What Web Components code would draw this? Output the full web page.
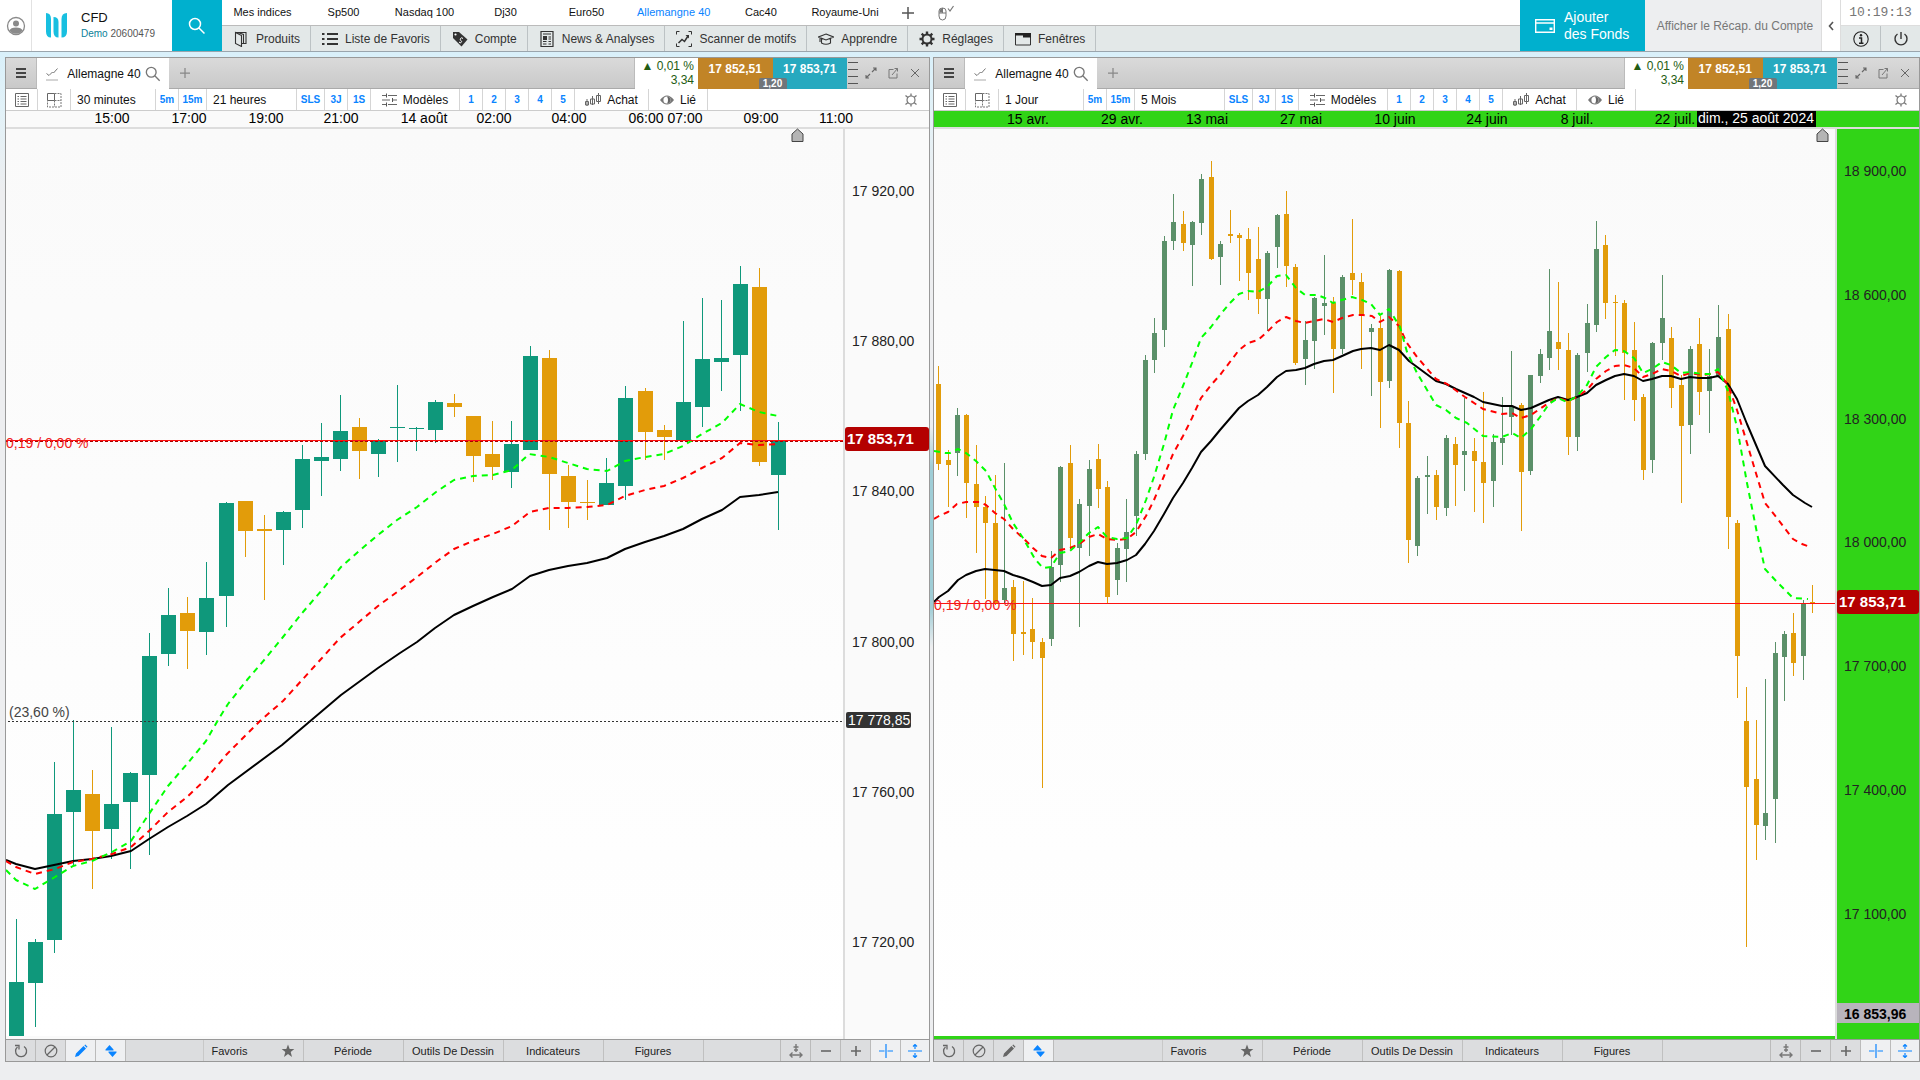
<!DOCTYPE html>
<html lang="fr">
<head>
<meta charset="utf-8">
<title>CFD – Allemagne 40</title>
<style>
html,body{margin:0;height:100%}
body{display:flex;flex-direction:column;font-family:"Liberation Sans",Arial,sans-serif;font-size:12px;color:#111;background:#edeef0;overflow:hidden}
</style>
</head>
<body>
<app-header>
  <index-link>Mes indices</index-link>
  <index-link>Sp500</index-link>
  <index-link>Nasdaq 100</index-link>
  <index-link>Dj30</index-link>
  <index-link>Euro50</index-link>
  <index-link active>Allemangne 40</index-link>
  <index-link>Cac40</index-link>
  <index-link>Royaume-Uni</index-link>
  <menu-item slot="menu" icon="pages">Produits</menu-item>
  <menu-item slot="menu" icon="list">Liste de Favoris</menu-item>
  <menu-item slot="menu" icon="tag">Compte</menu-item>
  <menu-item slot="menu" icon="news">News &amp; Analyses</menu-item>
  <menu-item slot="menu" icon="scan">Scanner de motifs</menu-item>
  <menu-item slot="menu" icon="cap">Apprendre</menu-item>
  <menu-item slot="menu" icon="cog">Réglages</menu-item>
  <menu-item slot="menu" icon="window">Fenêtres</menu-item>
</app-header>
<work-space>
  <chart-panel slot="left" period="30 minutes" range="21 heures" drawing>
    <price-chart data-set="intraday"></price-chart>
  </chart-panel>
  <chart-panel slot="right" period="1 Jour" range="5 Mois">
    <price-chart data-set="daily"></price-chart>
  </chart-panel>
</work-space>

<script>
const ICONS = {
  user:['0 0 20 20','<circle cx="10" cy="10" r="8.5" fill="none" stroke="#8a8a8a" stroke-width="1.3"/><circle cx="10" cy="7.5" r="3" fill="#8a8a8a"/><path d="M3.5 14.5Q4.5 11.5 10 11.5T16.500 14.500Q14 17.700 10 17.700T3.500 14.500Z" fill="#8a8a8a"/>'],
  logo:['0 0 22 25','<path d="M0 0Q5 0 5 6V24.500Q0 24.500 0 18.500ZM7.500 4Q12.500 4 12.500 9V24.500Q7.500 24.500 7.500 18.500ZM21 0Q15.500 0 15.500 6V24.500Q21 24.500 21 18.500Z" fill="#18bfe0"/>'],
  search:['0 0 18 18','<circle cx="7" cy="7" r="5.500" fill="none" stroke="currentColor" stroke-width="1.500"/><path d="M11 11L16.500 16.500" stroke="currentColor" stroke-width="1.500"/>'],
  plus:['0 0 12 12','<path d="M6 0V12M0 6H12" stroke="currentColor" stroke-width="1.500"/>'],
  mouse:['0 0 16 16','<path d="M1 6Q1 3 4.500 3T8 6V11Q8 15 4.500 15T1 11ZM1 8H8M4.500 3V8" fill="none" stroke="#777"/><path d="M1.500 7.500V6Q1.500 3.500 4.500 3.500V7.500Z" fill="#777"/><path d="M10 3.500L12 6L15.500 1" fill="none" stroke="#777" stroke-width="1.200"/>'],
  pages:['0 0 16 16','<path d="M2.500 1.500H13V12.500H9M2.500 1.500L8.500 4.500V15.500L2.500 12.500ZM5 1.500L10.500 3.500V13" fill="none" stroke="#333" stroke-width="1.100"/>'],
  list:['0 0 16 16','<path d="M0 3H2.500M0 8H2.500M0 13H2.500M5 3H16M5 8H16M5 13H16" stroke="#333" stroke-width="1.800"/>'],
  tag:['0 0 16 16','<path d="M1 1H7L15.500 8.500L9.500 15.500L1 7Z" fill="#333"/><circle cx="3.500" cy="3.500" r="1.100" fill="#fff"/><path d="M11 7.500Q9.500 6 8.500 7.500T9 9.500T8.500 12L7 11" fill="none" stroke="#fff"/>'],
  news:['0 0 16 16','<path d="M2 .500H14V15.500H2Z" fill="none" stroke="#333" stroke-width="1.200"/><path d="M4 3H12M9.500 6H12M9.500 8H12M4 10.500H7.500M9.500 10.500H12M4 13H7.500M9.500 13H12" stroke="#333" stroke-width="1.100"/><path d="M4 5H8V9H4Z" fill="#333"/>'],
  scan:['0 0 16 16','<path d="M.5 3.500V.5H3.500M12.500 .5H15.500V3.500M15.500 12.500V15.500H12.500M3.500 15.500H.5V12.500" fill="none" stroke="#333"/><path d="M2.500 12L6 8.500L8.500 10.500L12 5" fill="none" stroke="#333" stroke-width="1.500"/><path d="M9.500 4H13V7.500Z" fill="#333"/>'],
  cap:['0 0 16 16','<path d="M8 3L15.500 6L8 9L.5 6ZM3.500 7.500V12Q8 14.500 12.500 12V7.500M2 7V11" fill="none" stroke="#333" stroke-width="1.100"/>'],
  cog:['0 0 16 16','<circle cx="8" cy="8" r="4.500" fill="none" stroke="#333" stroke-width="2"/><path d="M8 .5V3M8 13V15.500M.5 8H3M13 8H15.500M2.700 2.700L4.500 4.500M11.500 11.500L13.300 13.300M2.700 13.300L4.500 11.500M11.500 4.500L13.300 2.700" stroke="#333" stroke-width="2.400"/>'],
  window:['0 0 16 16','<path d="M.5 2.500H15.500V14H.5Z" fill="none" stroke="#333"/><path d="M0 2H16V6.500H8V4.500H0Z" fill="#222"/>'],
  wallet:['0 0 20 16','<path d="M.7 1.700H19.300V14.300H.7ZM.7 5H19.300" fill="none" stroke="#fff" stroke-width="1.400"/><path d="M14.500 9.500H17.500V12H14.500Z" fill="#fff"/>'],
  chevron:['0 0 6 10','<path d="M5 1L1.500 5L5 9" fill="none" stroke="#555" stroke-width="1.600"/>'],
  info:['0 0 16 16','<circle cx="8" cy="8" r="7.200" fill="none" stroke="#222" stroke-width="1.100"/><circle cx="8" cy="4.300" r="1.200" fill="#222"/><path d="M6 7H8.500V12M6 12.200H10.500" fill="none" stroke="#222" stroke-width="1.500"/>'],
  power:['0 0 16 16','<path d="M8 1V8M4.500 3A6 6 0 1 0 11.500 3" fill="none" stroke="#333" stroke-width="1.400"/>'],
  burger:['0 0 12 12','<path d="M1 2H11M1 6H11M1 10H11" stroke="#444" stroke-width="1.800"/>'],
  trend:['0 0 14 14','<path d="M1.500 6.500L4 8.500L7.500 5L8.500 6L12.500 1.500" fill="none" stroke="#777"/><path d="M1 13H13" stroke="#aaa"/>'],
  ruler:['0 0 10 24','<path d="M0 1.500H10M0 8.500H10M0 15.500H10M0 22.500H10" stroke="#555"/>'],
  expand:['0 0 12 12','<path d="M7 5L11 1M8 1H11V4M5 7L1 11M1 8V11H4" fill="none" stroke="#666" stroke-width="1.100"/>'],
  popout:['0 0 12 12','<path d="M6.500 2.500H2V11H10V6.500M5 8L10.500 1.500M7.500 1.500H10.500V4.500" fill="none" stroke="#777"/>'],
  close:['0 0 12 12','<path d="M2 2L10 10M10 2L2 10" stroke="#666"/>'],
  sheet:['0 0 14 14','<path d="M.5 .5H13.500V13.500H.5Z" fill="none" stroke="#666"/><path d="M2.500 3.500H4M5.500 3.500H11.500M2.500 6H4M5.500 6H11.500M2.500 8.500H4M5.500 8.500H11.500M2.500 11H4M5.500 11H11.500" stroke="#666"/>'],
  grid:['0 0 16 16','<path d="M1.500 1.500H8.500V8.500H1.500Z" fill="none" stroke="#666"/><path d="M8.500 1.500H15V15H1.500V8.500M8.500 8.500V15M8.500 8.500H15" fill="none" stroke="#777" stroke-dasharray="2 1"/>'],
  sliders:['0 0 15 14','<path d="M0 2.500H4M6 2.500H15M0 7H8M11 7H15M0 11.500H4M6 11.500H15" stroke="#666" stroke-width="1.200"/><path d="M4.500 .5V4.500M10.500 5V9M4.500 9.500V13.500" stroke="#555"/>'],
  candles:['0 0 16 14','<path d="M2 6V13M.5 8.500H3.500V12H.5ZM7.500 3V12M5.500 6H9.500V11H5.500ZM13.500 0V11M11.500 2.500H15.500V8.500H11.500Z" fill="none" stroke="#666"/>'],
  eye:['0 0 14 12','<path d="M0 6Q7 -3 14 6Q7 15 0 6Z" fill="#777"/><circle cx="7" cy="6" r="3.600" fill="#fff"/><path d="M7 2.400A3.600 3.600 0 0 1 7 9.600Q9 6 7 2.400Z" fill="#666"/>'],
  gear:['0 0 14 14','<circle cx="7" cy="7" r="4" fill="none" stroke="#777" stroke-width="1.200"/><path d="M7 .5V3M7 11V13.500M1.500 2.500L4 4.500M10 9.500L12.500 11.500M1.500 11.500L4 9.500M10 4.500L12.500 2.500" stroke="#777" stroke-width="1.300"/>'],
  reload:['0 0 14 14','<path d="M3.500 3A5.500 5.500 0 1 0 10 2.500" fill="none" stroke="#666" stroke-width="1.300"/><path d="M1 1.500H5V5.500" fill="none" stroke="#666" stroke-width="1.300"/>'],
  ban:['0 0 14 14','<circle cx="7" cy="7" r="5.800" fill="none" stroke="#666" stroke-width="1.200"/><path d="M3 11L11 3" stroke="#666" stroke-width="1.200"/>'],
  pencil:['0 0 14 14','<path d="M1 13L2 9.500L9.500 2L12 4.500L4.500 12ZM10.300 1.300L11.300 .5L13.500 2.700L12.700 3.700Z" fill="currentColor"/>'],
  updown:['0 0 12 14','<path d="M4.500 1L8.500 5.500V6.500H.5V5.500ZM7.500 13L3.500 8.500V7.500H11.500V8.500Z" fill="#0a84ff"/>'],
  star:['0 0 14 14','<path d="M7 .5L8.700 5H13.300L9.700 8L11 13L7 10L3 13L4.300 8L.7 5H5.300Z" fill="#666"/>'],
  fit:['0 0 14 14','<path d="M7 0V8M4.500 3H9.500M1 11H13M3.500 8.500L1 11L3.500 13.500M10.500 8.500L13 11L10.500 13.500M5 6H9" fill="none" stroke="#777" stroke-width="1.400"/>'],
  minus:['0 0 12 12','<path d="M1 6H11" stroke="#666" stroke-width="1.600"/>'],
  add:['0 0 12 12','<path d="M1 6H11M6 1V11" stroke="#666" stroke-width="1.600"/>'],
  cross:['0 0 14 14','<path d="M7 0V14M0 7H5.500M8.500 7H14" stroke="#0a84ff" stroke-width="1.200"/>'],
  vfit:['0 0 14 14','<path d="M0 7H14M7 0V5M7 9V14M5 2.500L7 .5L9 2.500M5 11.500L7 13.500L9 11.500" fill="none" stroke="#0a84ff" stroke-width="1.200"/>']
};
const icon = (name, w, h = w) => `<svg viewBox="${ICONS[name][0]}" width="${w}" height="${h}" aria-hidden="true">${ICONS[name][1]}</svg>`;
const BASE = ':host,*{box-sizing:border-box}button{font:inherit;color:inherit;background:none;border:0;margin:0;padding:0;display:flex;align-items:center;justify-content:center;white-space:nowrap}svg{display:block;flex:none}';

class Base extends HTMLElement {
  connectedCallback() {
    if (this.shadowRoot) return;
    this.attachShadow({mode: 'open'}).innerHTML = `<style>${BASE}${this.css()}</style>${this.html()}`;
  }
}

customElements.define('index-link', class extends Base {
  css() { return ':host{display:block;min-width:81px}:host([active]){--c:#0a84ff}a{display:flex;justify-content:center;padding:0 10px;font-size:11px;line-height:25px;color:var(--c,#111);text-decoration:none;white-space:nowrap}'; }
  html() { return '<a href="#"><slot></slot></a>'; }
});

customElements.define('menu-item', class extends Base {
  css() { return ':host{display:flex;border-right:1px solid #bcc2c4}button{gap:7px;padding:0 10px 0 11px;color:#333}'; }
  html() { return `<button>${icon(this.getAttribute('icon'), 16)}<slot></slot></button>`; }
});

customElements.define('app-header', class extends Base {
  css() { return `:host{display:flex;height:52px;background:#fff;border-bottom:1px solid #9aa5ad;flex:none}
  .user{width:32px;border-right:1px solid #e2e2e2;align-self:stretch}
  .brand{display:flex;align-items:center;gap:13px;width:140px;padding-left:14px}
  .brand p{margin:0;font-size:13px;line-height:16px}.brand small{display:block;font-size:10px;line-height:15px;color:#555}.brand b{font-weight:400;color:#0b7f99}
  .search{width:50px;background:#00b0ce;color:#fff}
  .main{flex:1;min-width:0;display:flex;flex-direction:column}
  nav{display:flex;align-items:center;height:26px;border-bottom:1px solid #bbb}
  .menu{display:flex;flex:1;background:#e3e8e8}
  .tool{width:38px;color:#555}
  .fund{background:#00b0ce;color:#fff;width:125px;gap:9px;font-size:14px;line-height:17px;text-align:left;justify-content:flex-start;padding-left:15px}
  .recap{background:#edeef0;color:#777;width:177px;padding-left:4px;border-right:1px solid #ddd}
  .chev{width:18px}
  .side{width:80px;display:flex;flex-direction:column;border-left:1px solid #ddd}
  time{height:26px;font:13px/25px "Liberation Mono",monospace;color:#777;text-align:center;border-bottom:1px solid #ddd}
  .side div{flex:1;display:flex;background:#e3e8e8}.side button{flex:1}.side button+button{border-left:1px solid #bcc2c4}`; }
  html() { return `<button class="user" aria-label="Profil">${icon('user', 20)}</button>
  <div class="brand">${icon('logo', 22, 25)}<p>CFD<small><b>Demo</b> 20600479</small></p></div>
  <button class="search" aria-label="Rechercher">${icon('search', 18)}</button>
  <div class="main"><nav><slot></slot><button class="tool" aria-label="Ajouter une liste">${icon('plus', 12)}</button><button class="tool" aria-label="Souris">${icon('mouse', 16)}</button></nav>
  <div class="menu"><slot name="menu"></slot></div></div>
  <button class="fund">${icon('wallet', 20, 16)}<span>Ajouter<br>des Fonds</span></button>
  <button class="recap">Afficher le Récap. du Compte</button>
  <button class="chev" aria-label="Replier">${icon('chevron', 6, 10)}</button>
  <div class="side"><time>10:19:13</time><div><button aria-label="Informations">${icon('info', 16)}</button><button aria-label="Quitter">${icon('power', 16)}</button></div></div>`; }
});

customElements.define('work-space', class extends Base {
  css() { return `:host{flex:1;min-height:0;display:grid;grid-template-columns:925fr 3px 987fr;padding:5px 0 18px 5px;
  background:linear-gradient(#d9f0fa 0,#e3f2f8 60px,#edeef0 140px)}
  .gap{background:linear-gradient(transparent 370px,#9fcdd6 410px,#9fcdd6 550px,transparent 590px)}`; }
  html() { return '<slot name="left"></slot><div class="gap"></div><slot name="right"></slot>'; }
});

customElements.define('chart-panel', class extends Base {
  css() { return `:host{display:flex;flex-direction:column;min-width:0;border:1px solid #999;background:#fff}
  .tabs{display:flex;height:31px;background:linear-gradient(#dadada,#c9c9c9);border-bottom:1px solid #aaa}
  .burger{width:31px;border-right:1px solid #bbb}
  .tab{width:132px;background:#fff;gap:8px;height:31px}.tab svg:last-child{margin-left:-4px;color:#777}
  .new{width:32px;color:#888}.fill{flex:1;border-right:1px solid #bbb}
  .chg{width:63px;background:#fff;height:31px;color:#235c12;text-align:right;padding:1px 4px 0 0;line-height:14px}
  .quotes{position:relative;display:flex;width:149px;font-weight:700;color:#fff}
  .quotes button{flex:1;height:31px;align-items:flex-start;padding-top:4px;background:#c18427}.quotes button+button{background:#27a9bf}
  .spread{position:absolute;left:50%;bottom:-1px;transform:translateX(-50%);width:28px;height:11px;line-height:11px;font-size:10px;text-align:center;background:#70757a;border-radius:2px 2px 0 0}
  .win{display:flex;align-items:center;width:82px}.win svg:first-child{margin:0 2px 0 1px}.win button{width:22px}
  .bar{display:flex;height:22px;border-bottom:1px solid #ccc;background:#fff}
  .bar button{border-right:1px solid #d5d5d5;width:23px}
  .bar .s{font-size:10px;font-weight:700;color:#0a84ff}
  .bar .w28{width:28px}.bar .ic{width:32px}.bar .ic+.ic{width:33px}
  .bar .per{width:85px;justify-content:flex-start;padding-left:6px}.bar .rng{width:90px;justify-content:flex-start;padding-left:6px}
  .bar .mod{width:89px;gap:6px}.bar .buy{width:74px;gap:6px}.bar .lnk{width:59px;gap:6px}
  .bar .set{width:36px;margin-left:auto;border:0}
  ::slotted(*){flex:1;min-height:0}
  footer{display:flex;height:22px;border-top:1px solid #999;background:#dcdddf;font-size:11px;color:#222;justify-content:space-between}
  footer div{display:flex}footer button{width:30px;border-right:1px solid #bbb;color:#666}footer .on{background:#eff0f2;color:#0a84ff}
  footer .mid{border-left:1px solid #c8c8c8}.mid button{width:100px;color:#222;border-color:#c0c0c0}.mid .fav{justify-content:space-between;padding:0 8px}.mid .fav span{flex:1;text-align:left}
  footer .end{border-left:1px solid #bbb}footer .end button:last-child{border:0;width:28px}`; }
  html() {
    const s = (t, c = '') => `<button class="s ${c}">${t}</button>`;
    return `<div class="tabs"><button class="burger" aria-label="Menu">${icon('burger', 12)}</button>
    <button class="tab">${icon('trend', 14)}<span>Allemagne 40</span>${icon('search', 16)}</button>
    <button class="new" aria-label="Nouvel onglet">${icon('plus', 10)}</button><div class="fill"></div>
    <div class="chg">▲ 0,01 %<br>3,34</div>
    <div class="quotes"><button>17 852,51</button><button>17 853,71</button><span class="spread">1,20</span></div>
    <div class="win">${icon('ruler', 10, 24)}<button aria-label="Agrandir">${icon('expand', 12)}</button><button aria-label="Détacher">${icon('popout', 12)}</button><button aria-label="Fermer">${icon('close', 12)}</button></div></div>
    <div class="bar"><button class="ic" aria-label="Ordres">${icon('sheet', 14)}</button><button class="ic" aria-label="Grille">${icon('grid', 16)}</button>
    <button class="per">${this.getAttribute('period')}</button>${s('5m')}${s('15m', 'w28')}<button class="rng">${this.getAttribute('range')}</button>
    ${s('SLS', 'w28')}${s('3J')}${s('1S')}<button class="mod">${icon('sliders', 15, 14)}Modèles</button>${s(1)}${s(2)}${s(3)}${s(4)}${s(5)}
    <button class="buy">${icon('candles', 16, 14)}Achat</button><button class="lnk">${icon('eye', 14, 12)}Lié</button><button class="set" aria-label="Options">${icon('gear', 14)}</button></div>
    <slot></slot>
    <footer><div><button aria-label="Recharger">${icon('reload', 14)}</button><button aria-label="Aucun">${icon('ban', 14)}</button><button class="${this.hasAttribute('drawing') ? 'on' : ''}" aria-label="Dessiner">${icon('pencil', 14)}</button><button class="on" aria-label="Échelle">${icon('updown', 12, 14)}</button></div>
    <div class="mid"><button class="fav"><span>Favoris</span>${icon('star', 14)}</button><button>Période</button><button>Outils De Dessin</button><button>Indicateurs</button><button>Figures</button></div>
    <div class="end"><button aria-label="Ajuster">${icon('fit', 14)}</button><button aria-label="Réduire">${icon('minus', 12)}</button><button aria-label="Augmenter">${icon('add', 12)}</button><button class="on" aria-label="Curseur">${icon('cross', 14)}</button><button class="on" aria-label="Ajustement vertical">${icon('vfit', 14)}</button></div></footer>`;
  }
});

/* Candles: left edge, body top, body bottom, high, low; a leading "-" marks a falling candle. */
const DATA = {
  intraday: {
    left: 6, axis: 84, width: 15, up: '#0f987b', axisBg: '#fafafa', timeY: 12,
    times: [[112,'15:00'],[189,'17:00'],[266,'19:00'],[341,'21:00'],[424,'14 août'],[494,'02:00'],[569,'04:00'],[646,'06:00'],[685,'07:00'],[761,'09:00'],[836,'11:00']],
    marker: 797, last: 440, note: 443, fib: 721,
    prices: [[191,'17 920,00'],[341,'17 880,00'],[491,'17 840,00'],[642,'17 800,00'],[792,'17 760,00'],[942,'17 720,00']],
    candles: `9 982 1036 919 1036|28 942 983 939 1027|47 814 940 762 953|66 790 812 720 865|-85 794 831 770 889|104 804 829 727 859|123 773 802 772 869|142 656 775 633 855|161 615 654 588 666|-180 613 631 597 669|199 598 632 562 655|219 503 596 502 627|-238 501 531 501 557|-257 529 531 515 600|276 512 530 511 565|295 459 510 445 528|314 457 461 423 496|333 431 459 395 471|-352 427 451 418 479|371 440 454 439 477|390 427 428 385 462|409 428 429 427 451|428 402 430 400 443|-447 403 407 394 417|-466 416 456 416 482|-485 454 467 421 480|504 444 472 421 488|523 356 450 346 450|-542 358 474 350 530|-561 476 502 465 528|-580 502 503 480 520|599 483 505 458 505|618 398 486 386 500|-638 391 432 388 460|-657 430 437 425 460|676 402 440 321 440|695 359 407 298 427|714 358 362 300 391|733 284 355 266 411|-752 287 462 268 466|771 441 475 422 530`,
    slow: '6,860 16,864 35,869 54,865 73,861 92,859 111,856 131,851 149,839 168,827 187,816 206,804 228,785 282,745 341,695 378,668 400,653 417,642 435,628 454,615 473,606 493,597 512,589 530,576 549,570 568,566 587,563 607,558 625,549 645,542 664,536 683,529 702,519 722,510 740,497 759,495 778,492',
    mid: '6,861 16,867 35,874 55,869 73,862 92,859 112,854 131,847 149,831 168,812 187,797 206,779 227,754 260,721 283,701 322,658 340,638 359,622 378,606 397,592 417,577 436,562 454,549 473,541 493,534 512,526 530,512 549,508 568,508 587,507 607,505 625,496 645,490 664,486 683,478 702,468 722,458 740,443 759,445 778,444',
    fast: '6,870 16,880 35,889 55,877 73,866 92,861 112,852 131,841 149,814 168,786 187,764 206,741 218,720 228,704 247,680 265,659 283,637 303,612 322,590 341,567 359,551 378,535 397,520 417,507 436,492 454,480 473,476 493,475 512,470 529,454 549,457 568,463 587,469 607,471 625,461 645,457 664,454 683,446 702,434 722,423 740,404 759,412 778,416'
  },
  daily: {
    left: 934, axis: 82, width: 5, up: '#5b9069', axisBg: '#31d417', timeY: 13,
    times: [[1028,'15 avr.'],[1122,'29 avr.'],[1207,'13 mai'],[1301,'27 mai'],[1395,'10 juin'],[1487,'24 juin'],[1577,'8 juil.'],[1675,'22 juil.']],
    cursor: 'dim., 25 août 2024', marker: 1822, last: 603, note: 605,
    prices: [[171,'18 900,00'],[295,'18 600,00'],[419,'18 300,00'],[542,'18 000,00'],[666,'17 700,00'],[790,'17 400,00'],[914,'17 100,00']],
    low: [1013,'16 853,96'],
    candles: `-936 384 464 366 470|-946 460 465 450 507|955 415 453 408 476|-964 415 483 414 518|-974 484 507 445 553|-983 507 523 496 599|-993 523 603 475 605|1002 588 600 463 603|-1011 587 634 580 661|-1021 632 634 581 655|-1030 629 642 598 659|-1040 642 658 638 788|1049 567 639 551 646|1058 467 565 466 582|-1068 463 538 445 549|1077 504 548 499 627|1087 469 506 460 556|-1096 459 489 444 508|-1105 487 597 481 603|1115 548 580 543 595|1124 532 549 499 582|1134 454 516 451 536|1143 360 454 355 460|1152 333 360 318 373|1162 241 330 236 347|1171 222 241 194 250|-1181 224 243 211 251|1190 222 245 221 286|1199 179 223 174 235|-1209 177 259 161 260|1218 244 257 241 285|-1228 234 236 210 243|-1237 235 238 233 281|-1246 239 273 228 300|-1256 259 299 227 314|1265 253 299 251 331|1275 215 247 214 268|-1284 214 266 191 287|-1293 267 363 264 365|1303 340 359 321 385|1312 298 341 297 369|1322 303 306 255 335|-1331 303 349 297 393|1340 277 349 275 354|-1350 273 280 219 295|-1359 282 316 273 369|1369 328 332 324 396|-1378 328 382 316 428|1387 270 381 269 388|-1397 271 423 270 448|-1406 423 540 401 563|1415 478 546 476 556|1425 475 477 456 514|-1434 475 507 470 520|1444 438 508 435 516|-1453 444 465 437 506|1462 451 455 398 491|-1472 451 461 438 512|-1481 462 483 392 523|1491 442 481 434 507|1500 438 443 397 465|1509 406 417 351 435|-1519 405 472 403 531|1528 375 471 375 475|1538 354 376 349 383|1547 331 358 269 370|-1556 342 349 282 370|-1566 350 437 333 455|1575 355 437 353 451|1585 323 353 304 372|1594 249 325 221 332|-1603 245 303 235 319|-1613 302 303 295 356|-1622 303 353 300 400|-1632 350 400 322 421|-1641 397 470 394 480|1650 343 460 342 473|1660 318 343 275 360|-1669 338 388 327 408|-1679 385 426 375 503|1688 349 425 346 454|-1697 344 392 318 415|1707 376 391 349 433|1716 337 376 305 376|-1726 329 517 314 549|-1735 523 656 520 698|-1744 721 787 687 947|-1754 779 825 720 860|1763 813 826 679 840|1773 653 799 642 843|1782 634 657 631 701|-1791 633 663 613 676|1801 603 656 600 680|-1810 602 603 585 613`,
    slow: '934,602 939,597 948,591 958,580 966,575 976,571 985,569 1004,571 1013,575 1023,578 1033,582 1042,586 1051,585 1060,578 1070,576 1079,572 1089,566 1098,562 1107,564 1117,563 1127,560 1136,555 1145,544 1154,531 1164,514 1173,498 1183,483 1192,468 1201,452 1211,441 1220,430 1239,408 1248,401 1258,395 1267,387 1277,377 1286,371 1296,370 1305,368 1314,364 1324,361 1333,360 1342,356 1353,351 1361,349 1371,348 1380,350 1389,345 1399,350 1409,361 1436,381 1446,384 1456,389 1474,397 1483,402 1502,406 1512,406 1521,410 1531,408 1540,404 1549,400 1558,397 1568,400 1577,397 1587,393 1596,385 1606,380 1615,376 1624,374 1634,376 1643,381 1652,379 1662,376 1671,376 1681,379 1690,377 1699,378 1709,378 1718,376 1728,384 1737,399 1747,424 1765,466 1783,485 1793,495 1805,503 1812,507',
    mid: '934,519 939,516 948,512 957,504 966,502 980,502 986,505 995,513 1004,519 1013,529 1023,538 1033,548 1042,556 1051,558 1060,550 1070,548 1079,544 1089,537 1098,534 1107,539 1117,540 1127,539 1136,532 1146,516 1154,500 1164,476 1173,454 1183,436 1192,418 1201,398 1211,385 1220,375 1239,350 1248,343 1258,340 1267,332 1277,322 1286,317 1296,321 1305,323 1324,319 1333,322 1342,318 1353,315 1363,315 1372,316 1380,322 1389,317 1399,326 1407,343 1417,357 1436,379 1447,384 1465,397 1483,409 1502,414 1512,413 1521,418 1531,415 1550,402 1558,398 1568,401 1577,397 1588,389 1596,379 1606,371 1615,366 1624,365 1634,368 1643,377 1652,374 1662,369 1671,371 1681,376 1690,373 1702,375 1710,374 1718,372 1728,385 1737,410 1747,443 1755,470 1765,503 1777,518 1793,539 1802,544 1810,547',
    fast: '934,451 945,453 950,453 958,449 966,453 976,461 986,471 995,488 1004,504 1013,523 1023,538 1035,559 1043,568 1051,567 1060,553 1070,551 1079,543 1089,533 1098,527 1107,537 1117,539 1127,538 1136,525 1146,500 1154,477 1164,444 1173,410 1183,386 1192,363 1201,338 1211,327 1220,315 1229,304 1239,294 1248,291 1258,292 1267,287 1277,276 1286,275 1296,288 1305,295 1317,295 1325,298 1333,303 1342,300 1352,297 1362,300 1371,304 1380,315 1389,309 1400,327 1407,352 1417,373 1436,405 1446,410 1456,418 1467,423 1483,436 1502,437 1512,433 1521,438 1531,429 1540,417 1549,404 1558,398 1567,402 1577,396 1587,385 1596,367 1606,357 1615,350 1624,351 1634,358 1643,373 1652,369 1662,362 1671,365 1681,373 1690,372 1702,374 1710,374 1718,369 1728,391 1737,427 1747,483 1757,533 1765,569 1777,582 1793,598 1808,599'
  }
};
const TOP = 129;

customElements.define('price-chart', class extends Base {
  get d() { return DATA[this.dataset.set]; }
  css() { const d = this.d; return `:host{display:grid;grid-template:16px 2px 1fr 3px/1fr ${d.axis + 2}px;position:relative;font-size:14px}
  svg{width:100%;height:100%;overflow:hidden}
  .time{grid-area:1/1/2/3;background:${d.axisBg}}.line{grid-area:2/1/3/3;background:#ddd}
  .plot{grid-area:3/1/4/2;background:linear-gradient(#fafafa,#fff);min-height:0;min-width:0}
  .price{grid-area:3/2/5/3;background:${d.axisBg};border-left:2px solid #dcdcdc;overflow:visible;min-height:0}
  .foot{grid-area:4/1/5/2;background:${d.axisBg}}
  .mark{position:absolute;top:17px;width:13px;height:14px;left:${d.marker - d.left - 6}px}`; }
  html() {
    const d = this.d, L = d.left, o = '#e29c0a';
    const candles = d.candles.split('|').map(c => {
      const down = c[0] === '-', [x, t, b, h, l] = c.replace('-', '').split(' ').map(Number), f = down ? o : d.up;
      return `<path fill="${f}" d="M${x} ${t}h${d.width}V${b}h-${d.width}ZM${x + (d.width - 1) / 2} ${h}h1V${l}h-1Z"/>`;
    }).join('');
    const poly = (p, c, extra = '') => `<polyline points="${p}" fill="none" stroke="${c}" stroke-width="2" stroke-linejoin="round" ${extra}/>`;
    const dash = 'stroke-dasharray="6 5"';
    const tag = (y, h, bg, t, size, x, w, r) => `<rect x="${x}" y="${y - h / 2}" width="${w}" height="${h}" rx="${r}" fill="${bg}"/><text x="${x + 2}" y="${y + 5}" fill="#fff" font-size="${size}">${t}</text>`;
    return `<svg class="time">${d.times.map(([x, t]) => `<text x="${x - L}" y="${d.timeY}" text-anchor="middle">${t}</text>`).join('')}
      ${d.cursor ? `<rect x="763" y="0" width="119" height="16" fill="#000"/><text x="822" y="12" text-anchor="middle" fill="#fff">${d.cursor}</text>` : ''}</svg>
    <div class="line"></div>
    <svg class="plot"><g transform="translate(${-L} ${-TOP})">
      ${candles}
      ${d.fib ? `<path d="M0 ${d.fib + .5}H9999" stroke="#333" stroke-dasharray="2 2"/><text x="9" y="${d.fib - 4}" fill="#444">(23,60 %)</text><path d="M0 ${d.last + 1.5}H9999" stroke="#a00" stroke-dasharray="3 2"/>` : ''}
      ${poly(d.slow, '#000')}${poly(d.mid, '#f00', dash)}${poly(d.fast, '#0f0', dash)}
      <path d="M0 ${d.last + .5}H9999" stroke="#f11"/>
      <text x="${L}" y="${d.note + 5}" fill="#f02020">0,19 / 0,00 %</text></g></svg>
    <svg class="price"><g transform="translate(0 ${-TOP})">
      ${d.prices.map(([y, t]) => `<text x="7" y="${y + 5}" fill="#222">${t}</text>`).join('')}
      ${d.fib ? tag(d.fib - 1, 16, '#333', '17 778,85', 14, 1, 65, 2) : ''}
      <g font-weight="700">${tag(d.last - 1, 24, '#b40000', '17 853,71', 15, 0, d.axis, 3)}
      ${d.low ? `<rect y="${d.low[0] - 10}" width="${d.axis}" height="20" fill="#b8b4bc"/><text x="7" y="${d.low[0] + 6}">${d.low[1]}</text>` : ''}</g></g></svg>
    <div class="foot"></div>
    <svg class="mark" viewBox="0 0 13 14"><path d="M6.500 1L12 6V13.500H1V6Z" fill="#b5b5b5" stroke="#444"/></svg>`;
  }
});
</script>
</body>
</html>
